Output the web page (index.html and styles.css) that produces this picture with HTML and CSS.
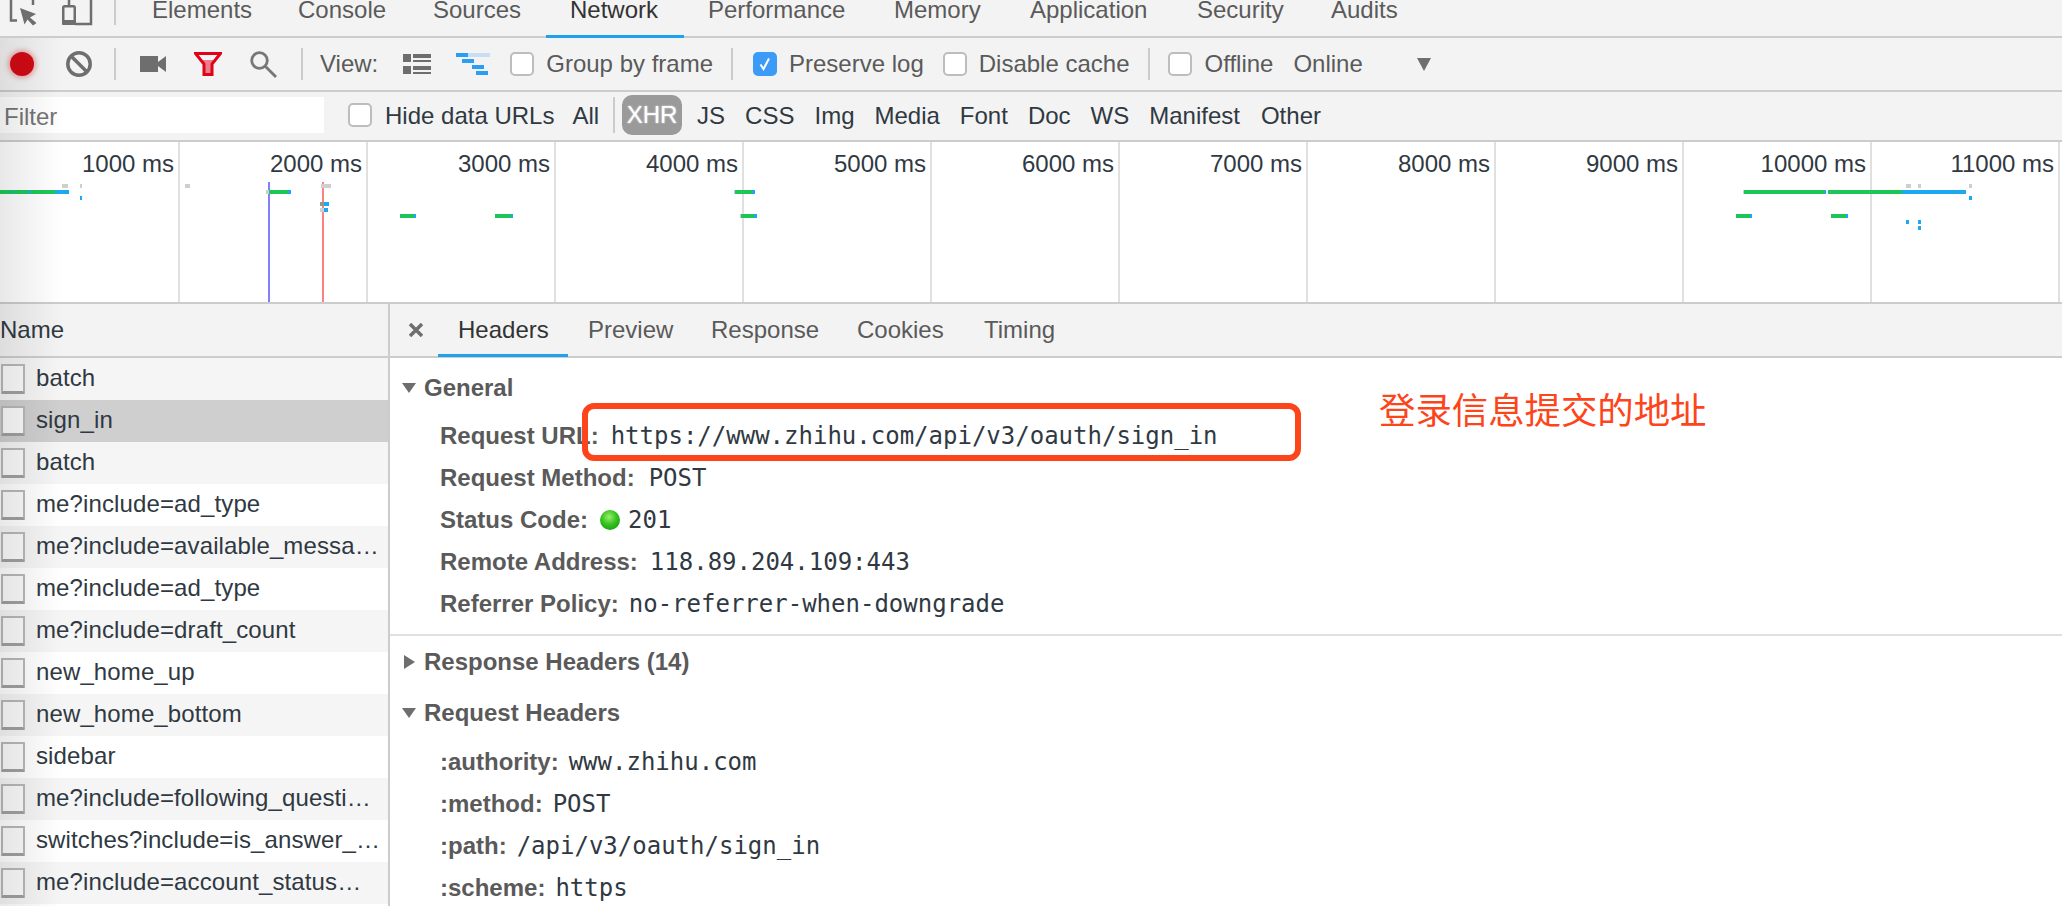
FILE: index.html
```html
<!DOCTYPE html>
<html lang="en">
<head>
<meta charset="utf-8">
<title>Network</title>
<link rel="stylesheet" href="styles.css">
</head>
<body>
<div class="page">
  <header class="tabbar">
    <svg class="tab-icons" width="116" height="36" viewBox="0 0 116 36">
      <path class="ln" d="M11 0V20.500H17M33 0V5" />
      <path class="fl" d="M20 8L36 14L30 17.500L36.500 23L33 25.500L27.500 19.500L24.500 24.500Z" />
      <path class="ln" d="M69 0V6M91 0V24H75" />
      <rect class="ln" x="63.250" y="6.250" width="11.500" height="17.500" rx="1.500" />
      <rect class="fl" x="62" y="20" width="14" height="5" rx="1" />
      <rect class="sepfill" x="114" y="0" width="2" height="25" />
    </svg>
    <nav class="tabs">
      <a class="tab">Elements</a>
      <a class="tab">Console</a>
      <a class="tab">Sources</a>
      <a class="tab tab-on">Network</a>
      <a class="tab">Performance</a>
      <a class="tab">Memory</a>
      <a class="tab">Application</a>
      <a class="tab">Security</a>
      <a class="tab">Audits</a>
    </nav>
  </header>

  <div class="toolbar">
    <span class="record"></span>
    <svg class="i-clear" width="28" height="28" viewBox="0 0 28 28"><circle class="ln3" cx="14" cy="14" r="11.200"/><path class="ln3" d="M6 6L22 22"/></svg>
    <span class="sep s-clear"></span>
    <svg class="i-video" width="26" height="16" viewBox="0 0 26 16"><path class="fl" d="M0 0H18V16H0ZM18 6L26 0V16L18 10Z"/></svg>
    <svg class="i-funnel" width="28" height="24" viewBox="0 0 28 24"><path class="funnel-in" d="M7 8H21L17 13V21H11V13Z"/><path class="funnel" d="M1.500 1.500H26.500L18 12V22.500H10V12Z"/></svg>
    <svg class="i-search" width="28" height="27" viewBox="0 0 28 27"><circle class="ln-s" cx="9.500" cy="9.500" r="7.800"/><path class="ln-s" d="M15 15L26 26"/></svg>
    <span class="sep s-search"></span>
    <span class="tb-label l-view">View:</span>
    <svg class="i-list" width="28" height="20" viewBox="0 0 28 20"><path class="fl" d="M0 0H8V8H0ZM0 12H8V20H0ZM10 0H28V4H10ZM10 6H28V8H10ZM10 12H28V16H10ZM10 18H28V20H10Z"/></svg>
    <svg class="i-fall" width="34" height="22" viewBox="0 0 34 22"><path class="fall-b" d="M12 0H34V4H12Z"/><path class="fall-a" d="M0 0H12V4H0ZM6 6H18V10H6ZM16 12H28V16H16ZM20 18H32V22H20Z"/></svg>
    <span class="check c-frame"></span>
    <span class="tb-label l-check">Group by frame</span>
    <span class="sep s-frame"></span>
    <span class="check check-on c-log"><svg width="20" height="20" viewBox="0 0 20 20"><path class="tick" d="M5.500 10.500L8.500 15L14 4.500"/></svg></span>
    <span class="tb-label l-check">Preserve log</span>
    <span class="check c-cache"></span>
    <span class="tb-label l-check">Disable cache</span>
    <span class="sep s-cache"></span>
    <span class="check c-off"></span>
    <span class="tb-label l-check">Offline</span>
    <span class="tb-label l-online">Online</span>
    <span class="drop"></span>
  </div>

  <div class="filterbar">
    <div class="filter-input">Filter</div>
    <span class="check c-hide"></span>
    <span class="f-label l-hide">Hide data URLs</span>
    <span class="f-label l-all">All</span>
    <span class="sep s-all"></span>
    <span class="pill">XHR</span>
    <span class="f-label l-js">JS</span>
    <span class="f-label l-type">CSS</span>
    <span class="f-label l-type">Img</span>
    <span class="f-label l-type">Media</span>
    <span class="f-label l-type">Font</span>
    <span class="f-label l-type">Doc</span>
    <span class="f-label l-type">WS</span>
    <span class="f-label l-type">Manifest</span>
    <span class="f-label l-type">Other</span>
  </div>

  <section class="overview">
    <div class="ov-cell ov-first">1000 ms</div>
    <div class="ov-cell">2000 ms</div>
    <div class="ov-cell">3000 ms</div>
    <div class="ov-cell">4000 ms</div>
    <div class="ov-cell">5000 ms</div>
    <div class="ov-cell">6000 ms</div>
    <div class="ov-cell">7000 ms</div>
    <div class="ov-cell">8000 ms</div>
    <div class="ov-cell">9000 ms</div>
    <div class="ov-cell">10000 ms</div>
    <div class="ov-cell">11000 ms</div>

    <i class="mark mark-blue"></i>
    <i class="mark mark-red"></i>

    <i class="bar gy" style="left:62px;top:42px;width:6px"></i>
    <i class="bar gy" style="left:80px;top:42px;width:2px"></i>
    <i class="bar gy" style="left:185px;top:42px;width:5px"></i>
    <i class="bar gy" style="left:321px;top:42px;width:10px"></i>
    <i class="bar gy" style="left:1906px;top:42px;width:5px"></i>
    <i class="bar gy" style="left:1918px;top:42px;width:3px"></i>
    <i class="bar gy" style="left:1969px;top:42px;width:3px"></i>

    <i class="bar gn" style="left:0;top:48px;width:12px"></i>
    <i class="bar bl" style="left:12px;top:48px;width:1px"></i>
    <i class="bar gn" style="left:13px;top:48px;width:15px"></i>
    <i class="bar bl" style="left:28px;top:48px;width:2px"></i>
    <i class="bar gn" style="left:30px;top:48px;width:25px"></i>
    <i class="bar bl" style="left:55px;top:48px;width:14px"></i>
    <i class="bar gy" style="left:266px;top:48px;width:3px"></i>
    <i class="bar gn" style="left:269px;top:48px;width:19px"></i>
    <i class="bar bl" style="left:288px;top:48px;width:3px"></i>
    <i class="bar gy" style="left:734px;top:48px;width:1px"></i>
    <i class="bar gn" style="left:735px;top:48px;width:17px"></i>
    <i class="bar bl" style="left:752px;top:48px;width:3px"></i>
    <i class="bar gy" style="left:1743px;top:48px;width:1px"></i>
    <i class="bar gn" style="left:1744px;top:48px;width:80px"></i>
    <i class="bar bl" style="left:1824px;top:48px;width:2px"></i>
    <i class="bar gn" style="left:1828px;top:48px;width:74px"></i>
    <i class="bar bl" style="left:1902px;top:48px;width:64px"></i>

    <i class="bar bl" style="left:80px;top:54px;width:2px"></i>
    <i class="bar bl" style="left:1969px;top:54px;width:3px"></i>

    <i class="bar gg" style="left:320px;top:60px;width:4px"></i>
    <i class="bar bl" style="left:324px;top:60px;width:5px"></i>
    <i class="bar gy" style="left:320px;top:66px;width:4px"></i>
    <i class="bar bl" style="left:324px;top:66px;width:4px"></i>

    <i class="bar gn" style="left:400px;top:72px;width:14px"></i>
    <i class="bar bl" style="left:414px;top:72px;width:2px"></i>
    <i class="bar gn" style="left:495px;top:72px;width:16px"></i>
    <i class="bar bl" style="left:511px;top:72px;width:2px"></i>
    <i class="bar gy" style="left:740px;top:72px;width:1px"></i>
    <i class="bar gn" style="left:741px;top:72px;width:13px"></i>
    <i class="bar bl" style="left:754px;top:72px;width:3px"></i>
    <i class="bar gn" style="left:1736px;top:72px;width:14px"></i>
    <i class="bar bl" style="left:1750px;top:72px;width:2px"></i>
    <i class="bar gn" style="left:1831px;top:72px;width:15px"></i>
    <i class="bar bl" style="left:1846px;top:72px;width:2px"></i>

    <i class="bar bl" style="left:1906px;top:78px;width:3px"></i>
    <i class="bar bl" style="left:1918px;top:78px;width:3px"></i>
    <i class="bar bl" style="left:1918px;top:84px;width:3px"></i>
  </section>

  <main class="split">
    <aside class="list">
      <div class="list-head">Name</div>
      <div class="row"><span class="doc"></span><span class="row-name">batch</span></div>
      <div class="row row-sel"><span class="doc"></span><span class="row-name">sign_in</span></div>
      <div class="row"><span class="doc"></span><span class="row-name">batch</span></div>
      <div class="row"><span class="doc"></span><span class="row-name">me?include=ad_type</span></div>
      <div class="row"><span class="doc"></span><span class="row-name">me?include=available_messa…</span></div>
      <div class="row"><span class="doc"></span><span class="row-name">me?include=ad_type</span></div>
      <div class="row"><span class="doc"></span><span class="row-name">me?include=draft_count</span></div>
      <div class="row"><span class="doc"></span><span class="row-name">new_home_up</span></div>
      <div class="row"><span class="doc"></span><span class="row-name">new_home_bottom</span></div>
      <div class="row"><span class="doc"></span><span class="row-name">sidebar</span></div>
      <div class="row"><span class="doc"></span><span class="row-name">me?include=following_questi…</span></div>
      <div class="row"><span class="doc"></span><span class="row-name">switches?include=is_answer_…</span></div>
      <div class="row"><span class="doc"></span><span class="row-name">me?include=account_status…</span></div>
    </aside>

    <div class="detail">
      <div class="detail-tabs">
        <svg class="i-close" width="16" height="14" viewBox="0 0 16 14"><path class="ln3" d="M2 1L14 13M14 1L2 13"/></svg>
        <nav class="dtabs">
          <a class="dtab dtab-on">Headers</a>
          <a class="dtab">Preview</a>
          <a class="dtab">Response</a>
          <a class="dtab">Cookies</a>
          <a class="dtab">Timing</a>
        </nav>
      </div>
      <section class="sec sec-general">
        <h3 class="sec-title"><span class="tri-down"></span>General</h3>
        <div class="kv-list">
          <div class="kv"><b>Request URL:</b><code>https://www.zhihu.com/api/v3/oauth/sign_in</code></div>
          <div class="kv"><b>Request Method:</b><code class="code-wide">POST</code></div>
          <div class="kv"><b>Status Code:</b><span class="dot"></span><code class="code-status">201</code></div>
          <div class="kv"><b>Remote Address:</b><code>118.89.204.109:443</code></div>
          <div class="kv"><b>Referrer Policy:</b><code class="code-tight">no-referrer-when-downgrade</code></div>
        </div>
      </section>
      <section class="sec sec-response">
        <h3 class="sec-title"><span class="tri-right"></span>Response Headers (14)</h3>
      </section>
      <section class="sec">
        <h3 class="sec-title"><span class="tri-down"></span>Request Headers</h3>
        <div class="kv-list">
          <div class="kv"><b>:authority:</b><code class="code-tight">www.zhihu.com</code></div>
          <div class="kv"><b>:method:</b><code class="code-tight">POST</code></div>
          <div class="kv"><b>:path:</b><code class="code-tight">/api/v3/oauth/sign_in</code></div>
          <div class="kv"><b>:scheme:</b><code class="code-tight">https</code></div>
        </div>
      </section>
    </div>
  </main>

  <div class="shade"></div>
  <div class="note-box"></div>
  <div class="note-text">登录信息提交的地址</div>
</div>
</body>
</html>
```

FILE: styles.css
```css
* { box-sizing: border-box; }
html, body { margin: 0; padding: 0; background: #fff; }
.page {
  position: relative;
  width: 2062px;
  height: 906px;
  overflow: hidden;
  font: 24px/1 "Liberation Sans", Arial, sans-serif;
  color: #303942;
}

/* shared icon paints */
.fl { fill: #6e6e6e; }
.ln { fill: none; stroke: #6e6e6e; stroke-width: 2.5; }
.ln3 { fill: none; stroke: #6e6e6e; stroke-width: 3.5; }
.ln-s { fill: none; stroke: #777; stroke-width: 2.8; }
.sepfill { fill: #ccc; }
.sep { flex: none; width: 2px; height: 32px; background: #ccc; }

/* top tabs */
.tabbar {
  display: flex;
  height: 38px;
  background: #f3f3f3;
  border-bottom: 2px solid #ccc;
}
.tab-icons { flex: none; display: block; }
.tabs {
  display: grid;
  grid-template-columns: 146px 135px 137px 138px 186px 136px 167px 134px auto;
  margin-left: 12px;
}
.tab {
  padding-left: 24px;
  height: 38px;
  line-height: 19px;
  color: #5a5a5a;
}
.tab-on { color: #333; border-bottom: 3px solid #1fa2ec; }

/* toolbar */
.toolbar {
  display: flex;
  align-items: center;
  height: 54px;
  background: #f3f3f3;
  border-bottom: 2px solid #ccc;
  color: #5a5a5a;
}
.record {
  flex: none;
  width: 24px;
  height: 24px;
  margin-left: 10px;
  border-radius: 50%;
  background: #d20a14;
  box-shadow: 0 0 5px 2px rgba(220, 70, 80, .45);
}
.i-clear { flex: none; margin-left: 31px; }
.s-clear { margin-left: 21px; }
.i-video { flex: none; margin-left: 24px; }
.i-funnel { flex: none; margin-left: 28px; }
.funnel { fill: none; stroke: #e2001a; stroke-width: 3; }
.funnel-in { fill: #e8808a; }
.i-search { flex: none; margin-left: 28px; }
.s-search { margin-left: 23px; }
.tb-label { flex: none; line-height: 30px; }
.l-view { margin-left: 17px; }
.i-list { flex: none; margin-left: 25px; }
.i-fall { flex: none; margin-left: 25px; }
.fall-a { fill: #2a9df4; }
.fall-b { fill: #c9def5; }
.check {
  flex: none;
  display: flex;
  align-items: center;
  justify-content: center;
  width: 24px;
  height: 24px;
  background: #fff;
  border: 2px solid #bdbdbd;
  border-radius: 5px;
}
.check-on { background: #3d9bf8; border-color: #3d9bf8; }
.tick { fill: none; stroke: #fff; stroke-width: 2; }
.l-check { margin-left: 12px; }
.c-frame { margin-left: 20px; }
.s-frame { margin-left: 18px; }
.c-log { margin-left: 20px; }
.c-cache { margin-left: 19px; }
.s-cache { margin-left: 19px; }
.c-off { margin-left: 18px; }
.l-online { margin-left: 20px; }
.drop {
  flex: none;
  margin-left: 54px;
  border-top: 13px solid #6e6e6e;
  border-left: 7.5px solid transparent;
  border-right: 7.5px solid transparent;
}

/* filter bar */
.filterbar {
  display: flex;
  align-items: center;
  height: 50px;
  padding-bottom: 2px;
  background: #f3f3f3;
  border-bottom: 2px solid #ccc;
}
.filter-input {
  flex: none;
  width: 324px;
  height: 36px;
  padding-left: 4px;
  line-height: 39px;
  background: #fff;
  color: #757575;
}
.c-hide { margin-left: 24px; }
.f-label { flex: none; padding-top: 2px; line-height: 30px; }
.l-hide { margin-left: 13px; }
.l-all { margin-left: 18px; }
.s-all { margin-left: 14px; height: 36px; }
.pill {
  flex: none;
  width: 60px;
  height: 40px;
  margin-left: 7px;
  line-height: 40px;
  text-align: center;
  color: #fff;
  background: #9a9a9a;
  border-radius: 10px;
  text-shadow: 0 0 2px rgba(255, 255, 255, .8);
}
.l-js { margin-left: 15px; }
.l-type { margin-left: 20px; }
.l-type:last-child { margin-left: 21px; }

/* overview */
.overview {
  position: relative;
  display: flex;
  height: 162px;
  background: #fff;
  border-bottom: 2px solid #ccc;
}
.ov-cell {
  flex: none;
  width: 188px;
  height: 160px;
  padding: 7px 4px 0 0;
  line-height: 30px;
  text-align: right;
  border-right: 2px solid #e0e0e0;
}
.ov-first { width: 180px; }
.mark { position: absolute; top: 40px; bottom: 0; width: 2px; }
.mark-blue { left: 268px; background: #8080ff; }
.mark-red { left: 322px; background: #ff8080; }
.bar { position: absolute; height: 4px; }
.gy { background: #cfcfcf; }
.gg { background: #8a9a90; }
.gn { background: #1ec65a; }
.bl { background: #1fa8f2; }

/* split */
.split { display: flex; height: 602px; }
.list {
  flex: none;
  width: 390px;
  background: #fff;
  border-right: 2px solid #ccc;
}
.list-head {
  height: 54px;
  line-height: 52px;
  background: #f3f3f3;
  border-bottom: 2px solid #ccc;
}
.row {
  display: flex;
  align-items: center;
  height: 42px;
  padding-left: 1px;
}
.row:nth-child(even) { background: #f5f5f5; }
.row.row-sel { background: #cfcfcf; }
.doc {
  flex: none;
  width: 24px;
  height: 30px;
  background: #fbfbfb;
  border: 2px solid #b8b8b8;
  border-bottom: 3px solid #a0a0a0;
  border-radius: 1px;
}
.row-name {
  margin: -2px 0 0 11px;
  line-height: 30px;
  letter-spacing: .12px;
  white-space: nowrap;
}

/* detail */
.detail { flex: 1; min-width: 0; background: #fff; }
.detail-tabs {
  display: flex;
  align-items: center;
  height: 54px;
  background: #f3f3f3;
  border-bottom: 2px solid #ccc;
}
.i-close { flex: none; margin-left: 18px; }
.dtabs {
  display: grid;
  grid-template-columns: 130px 123px 146px 127px auto;
  margin-left: 14px;
}
.dtab {
  height: 54px;
  padding-left: 20px;
  line-height: 54px;
  color: #5a5a5a;
}
.dtab-on { color: #333; border-bottom: 3px solid #1fa2ec; }
.sec-general { padding: 9px 0 9px; border-bottom: 2px solid #e0e0e0; }
.sec-response { padding: 5px 0 9px; }
.sec-title {
  display: flex;
  align-items: center;
  height: 42px;
  margin: 0;
  font-size: 24px;
  font-weight: 700;
  color: #5a5a5a;
}
.tri-down {
  flex: none;
  margin: 0 8px 0 12px;
  border-top: 10px solid #6e6e6e;
  border-left: 7px solid transparent;
  border-right: 7px solid transparent;
}
.tri-right {
  flex: none;
  margin: 0 9px 0 14px;
  border-left: 11px solid #6e6e6e;
  border-top: 7px solid transparent;
  border-bottom: 7px solid transparent;
}
.kv-list { padding: 7px 0 0 50px; }
.sec-general .kv-list { padding-top: 6px; }
.kv {
  display: flex;
  align-items: baseline;
  height: 42px;
  line-height: 42px;
  white-space: nowrap;
}
.kv b { color: #5a5a5a; }
.kv code {
  margin-left: 12px;
  font-family: "DejaVu Sans Mono", "Liberation Mono", monospace;
  font-size: 24px;
  color: #303942;
}
.kv .code-wide { margin-left: 14px; }
.kv .code-tight { margin-left: 10px; }
.kv .code-status { margin-left: 8px; }
.dot {
  flex: none;
  align-self: center;
  width: 20px;
  height: 20px;
  margin-left: 12px;
  border-radius: 50%;
  background: radial-gradient(circle at 45% 35%, #9af06a 0, #35c21f 45%, #0f8f0c 100%);
}

/* overlays */
.shade {
  position: absolute;
  left: 0;
  top: 38px;
  bottom: 0;
  width: 62px;
  background: linear-gradient(to right, rgba(0, 0, 0, .09), rgba(0, 0, 0, 0));
  pointer-events: none;
}
.note-box {
  position: absolute;
  left: 582px;
  top: 403px;
  width: 719px;
  height: 58px;
  border: 6px solid #fd451c;
  border-radius: 12px;
}
.note-text {
  position: absolute;
  left: 1379px;
  top: 387px;
  font-family: "Noto Sans CJK SC", sans-serif;
  font-size: 36.400px;
  line-height: 42px;
  color: #fd451c;
}
```
